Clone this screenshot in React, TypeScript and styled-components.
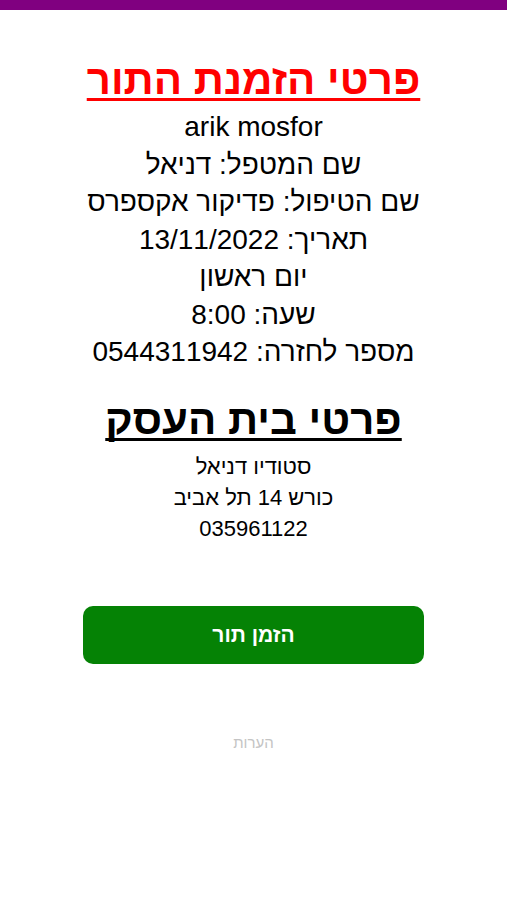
import React from "react";
import styled, { createGlobalStyle } from "styled-components";

const GlobalStyle = createGlobalStyle`
  body {
    margin: 0;
    background: #ffffff;
    font-family: "Liberation Sans", "DejaVu Sans", Arial, sans-serif;
  }
`;

const Page = styled.div({
  direction: "rtl",
  display: "flex",
  flexDirection: "column",
  alignItems: "center",
  minHeight: "900px",
});

const TopBar = styled.div({
  alignSelf: "stretch",
  height: "10px",
  background: "#800080",
});

const Title = styled.h1<{ $color: string; $size: number; $top: number }>`
  margin: ${(p) => p.$top}px 0 0;
  font-size: ${(p) => p.$size}px;
  font-weight: bold;
  color: ${(p) => p.$color};
  text-decoration: underline;
  text-decoration-skip-ink: none;
  text-underline-offset: 4px;
  text-decoration-thickness: 3px;
  line-height: 50px;
  text-align: center;
`;

const Line = styled.div<{ $size: number; $height: number }>`
  font-size: ${(p) => p.$size}px;
  line-height: ${(p) => p.$height}px;
  color: #000;
  text-align: center;
`;

const Details = styled.div({
  display: "flex",
  flexDirection: "column",
  alignItems: "center",
  marginTop: "3px",
});

const Business = styled.div({
  display: "flex",
  flexDirection: "column",
  alignItems: "center",
  marginTop: "6px",
});

const OrderButton = styled.button({
  marginTop: "62px",
  width: "341px",
  height: "58px",
  border: "none",
  borderRadius: "10px",
  background: "#058205",
  color: "#fff",
  fontFamily: "inherit",
  fontSize: "21px",
  fontWeight: "bold",
  direction: "rtl",
});

const Notes = styled.input({
  marginTop: "69px",
  width: "200px",
  border: "none",
  outline: "none",
  textAlign: "center",
  fontFamily: "inherit",
  fontSize: "15px",
  direction: "rtl",
  "&::placeholder": { color: "#c4c4c4" },
});

const booking = [
  "arik mosfor",
  "שם המטפל: דניאל",
  "שם הטיפול: פדיקור אקספרס",
  "תאריך: 13/11/2022",
  "יום ראשון",
  "שעה: 8:00",
  "מספר לחזרה: 0544311942",
];

const business = ["סטודיו דניאל", "כורש 14 תל אביב", "035961122"];

export default function App() {
  return (
    <Page>
      <GlobalStyle />
      <TopBar />
      <Title $color="#ff0000" $size={42} $top={45}>
        פרטי הזמנת התור
      </Title>
      <Details>
        {booking.map((t) => (
          <Line key={t} $size={28} $height={37.5}>
            {t}
          </Line>
        ))}
      </Details>
      <Title $color="#000" $size={42} $top={24}>
        פרטי בית העסק
      </Title>
      <Business>
        {business.map((t) => (
          <Line key={t} $size={22} $height={31}>
            {t}
          </Line>
        ))}
      </Business>
      <OrderButton>הזמן תור</OrderButton>
      <Notes placeholder="הערות" />
    </Page>
  );
}
